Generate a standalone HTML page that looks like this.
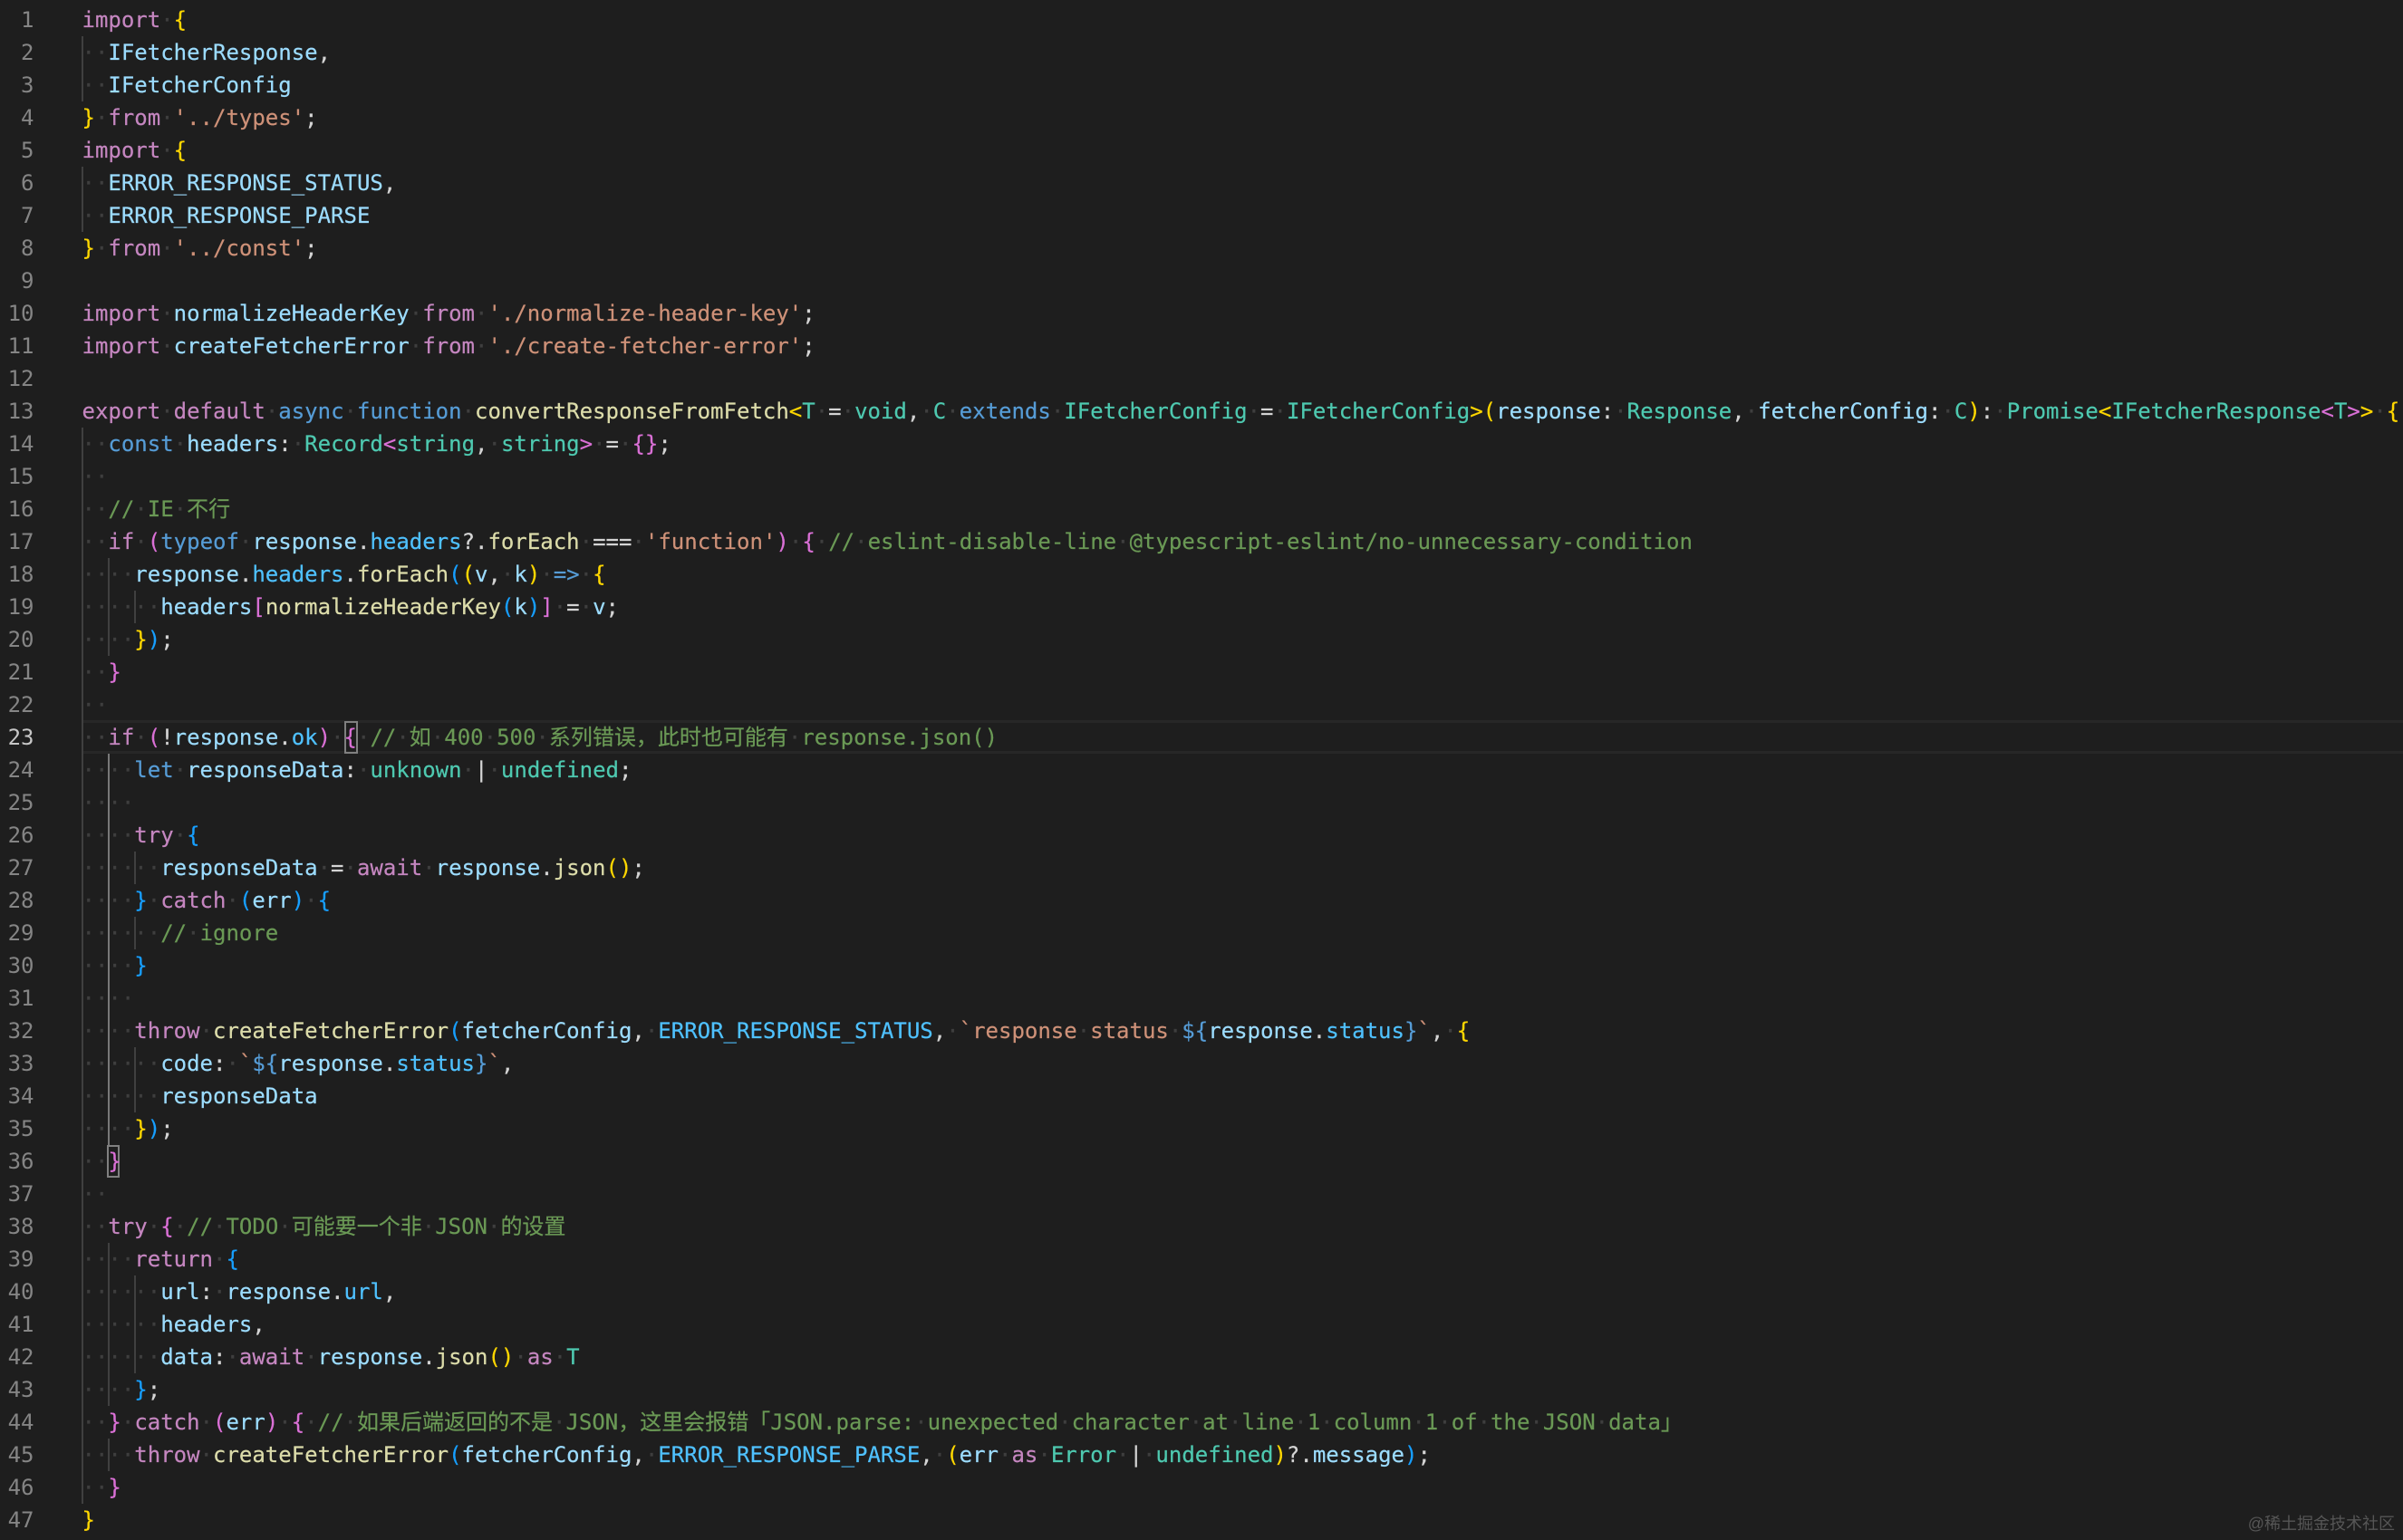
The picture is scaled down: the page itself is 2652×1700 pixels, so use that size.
<!DOCTYPE html>
<html lang="zh-CN">
<head>
<meta charset="utf-8">
<title>convertResponseFromFetch</title>
<style>
html,body{margin:0;padding:0;background:#1e1e1e}
html{width:2652px;height:1700px;overflow:hidden}
body{width:2652px;height:1700px;overflow:hidden;position:relative}
#code,#nums{position:absolute;top:4px;font:24px/36px "DejaVu Sans Mono","Noto Sans CJK SC",monospace;color:#d4d4d4}
#code{left:90.5px;width:2562px;height:1692px;overflow:hidden;-webkit-text-stroke:.2px}
#nums{left:0;width:37.5px;text-align:right;color:#858585}
#nums div:nth-child(23){color:#c6c6c6}
#code div,#nums div{height:36px;white-space:pre}
#code{z-index:3}
i{font-style:normal;color:#3e3e3e}
b{font-weight:400}
.k{color:#c586c0}.s{color:#ce9178}.v{color:#9cdcfe}.c{color:#4fc1ff}.f{color:#dcdcaa}.t{color:#4ec9b0}.y{color:#569cd6}.g{color:#ffd700}.m{color:#da70d6}.l{color:#179fff}.o{color:#6a9955}
.ig{position:absolute;width:2px;background:#404040;z-index:2}
.a{background:#787878}
.hl{position:absolute;left:91px;top:795px;width:2561px;height:31px;border:solid #272727;border-width:3px 0;z-index:1}
.bx{position:absolute;box-sizing:border-box;border:2px solid #808080;z-index:2}
#wm{position:absolute;right:9px;top:1671px;font:18px/22px "Liberation Sans","Noto Sans CJK SC",sans-serif;color:#565656;z-index:4}
</style>
</head>
<body>
<div class="hl"></div>
<div class="ig" style="left:90px;top:40px;height:72px"></div>
<div class="ig" style="left:90px;top:184px;height:72px"></div>
<div class="ig" style="left:90px;top:472px;height:1188px"></div>
<div class="ig" style="left:119px;top:616px;height:108px"></div>
<div class="ig a" style="left:119px;top:832px;height:432px"></div>
<div class="ig" style="left:119px;top:1372px;height:180px"></div>
<div class="ig" style="left:119px;top:1588px;height:36px"></div>
<div class="ig" style="left:148px;top:652px;height:36px"></div>
<div class="ig" style="left:148px;top:940px;height:36px"></div>
<div class="ig" style="left:148px;top:1012px;height:36px"></div>
<div class="ig" style="left:148px;top:1156px;height:72px"></div>
<div class="ig" style="left:148px;top:1408px;height:108px"></div>
<div class="bx" style="left:380px;top:796px;width:15px;height:36px"></div>
<div class="bx" style="left:118px;top:1264px;width:14px;height:36px"></div>
<div id="nums"><div>1</div><div>2</div><div>3</div><div>4</div><div>5</div><div>6</div><div>7</div><div>8</div><div>9</div><div>10</div><div>11</div><div>12</div><div>13</div><div>14</div><div>15</div><div>16</div><div>17</div><div>18</div><div>19</div><div>20</div><div>21</div><div>22</div><div>23</div><div>24</div><div>25</div><div>26</div><div>27</div><div>28</div><div>29</div><div>30</div><div>31</div><div>32</div><div>33</div><div>34</div><div>35</div><div>36</div><div>37</div><div>38</div><div>39</div><div>40</div><div>41</div><div>42</div><div>43</div><div>44</div><div>45</div><div>46</div><div>47</div></div>
<div id="code">
<div><b class="k">import</b><i>·</i><b class="g">{</b></div>
<div><i>··</i><b class="v">IFetcherResponse</b>,</div>
<div><i>··</i><b class="v">IFetcherConfig</b></div>
<div><b class="g">}</b><i>·</i><b class="k">from</b><i>·</i><b class="s">'../types'</b>;</div>
<div><b class="k">import</b><i>·</i><b class="g">{</b></div>
<div><i>··</i><b class="v">ERROR_RESPONSE_STATUS</b>,</div>
<div><i>··</i><b class="v">ERROR_RESPONSE_PARSE</b></div>
<div><b class="g">}</b><i>·</i><b class="k">from</b><i>·</i><b class="s">'../const'</b>;</div>
<div></div>
<div><b class="k">import</b><i>·</i><b class="v">normalizeHeaderKey</b><i>·</i><b class="k">from</b><i>·</i><b class="s">'./normalize-header-key'</b>;</div>
<div><b class="k">import</b><i>·</i><b class="v">createFetcherError</b><i>·</i><b class="k">from</b><i>·</i><b class="s">'./create-fetcher-error'</b>;</div>
<div></div>
<div><b class="k">export</b><i>·</i><b class="k">default</b><i>·</i><b class="y">async</b><i>·</i><b class="y">function</b><i>·</i><b class="f">convertResponseFromFetch</b><b class="g">&lt;</b><b class="t">T</b><i>·</i>=<i>·</i><b class="t">void</b>,<i>·</i><b class="t">C</b><i>·</i><b class="y">extends</b><i>·</i><b class="t">IFetcherConfig</b><i>·</i>=<i>·</i><b class="t">IFetcherConfig</b><b class="g">&gt;(</b><b class="v">response</b>:<i>·</i><b class="t">Response</b>,<i>·</i><b class="v">fetcherConfig</b>:<i>·</i><b class="t">C</b><b class="g">)</b>:<i>·</i><b class="t">Promise</b><b class="g">&lt;</b><b class="t">IFetcherResponse</b><b class="m">&lt;</b><b class="t">T</b><b class="m">&gt;</b><b class="g">&gt;</b><i>·</i><b class="g">{</b></div>
<div><i>··</i><b class="y">const</b><i>·</i><b class="v">headers</b>:<i>·</i><b class="t">Record</b><b class="m">&lt;</b><b class="t">string</b>,<i>·</i><b class="t">string</b><b class="m">&gt;</b><i>·</i>=<i>·</i><b class="m">{}</b>;</div>
<div><i>··</i></div>
<div><i>··</i><b class="o">//</b><i>·</i><b class="o">IE</b><i>·</i><b class="o">不行</b></div>
<div><i>··</i><b class="k">if</b><i>·</i><b class="m">(</b><b class="y">typeof</b><i>·</i><b class="v">response</b>.<b class="c">headers</b>?.<b class="f">forEach</b><i>·</i>===<i>·</i><b class="s">'function'</b><b class="m">)</b><i>·</i><b class="m">{</b><i>·</i><b class="o">//</b><i>·</i><b class="o">eslint-disable-line</b><i>·</i><b class="o">@typescript-eslint/no-unnecessary-condition</b></div>
<div><i>····</i><b class="v">response</b>.<b class="c">headers</b>.<b class="f">forEach</b><b class="l">(</b><b class="g">(</b><b class="v">v</b>,<i>·</i><b class="v">k</b><b class="g">)</b><i>·</i><b class="y">=&gt;</b><i>·</i><b class="g">{</b></div>
<div><i>······</i><b class="v">headers</b><b class="m">[</b><b class="f">normalizeHeaderKey</b><b class="l">(</b><b class="v">k</b><b class="l">)</b><b class="m">]</b><i>·</i>=<i>·</i><b class="v">v</b>;</div>
<div><i>····</i><b class="g">}</b><b class="l">)</b>;</div>
<div><i>··</i><b class="m">}</b></div>
<div><i>··</i></div>
<div><i>··</i><b class="k">if</b><i>·</i><b class="m">(</b>!<b class="v">response</b>.<b class="c">ok</b><b class="m">)</b><i>·</i><b class="m">{</b><i>·</i><b class="o">//</b><i>·</i><b class="o">如</b><i>·</i><b class="o">400</b><i>·</i><b class="o">500</b><i>·</i><b class="o">系列错误，此时也可能有</b><i>·</i><b class="o">response.json()</b></div>
<div><i>····</i><b class="y">let</b><i>·</i><b class="v">responseData</b>:<i>·</i><b class="t">unknown</b><i>·</i>|<i>·</i><b class="t">undefined</b>;</div>
<div><i>····</i></div>
<div><i>····</i><b class="k">try</b><i>·</i><b class="l">{</b></div>
<div><i>······</i><b class="v">responseData</b><i>·</i>=<i>·</i><b class="k">await</b><i>·</i><b class="v">response</b>.<b class="f">json</b><b class="g">()</b>;</div>
<div><i>····</i><b class="l">}</b><i>·</i><b class="k">catch</b><i>·</i><b class="l">(</b><b class="v">err</b><b class="l">)</b><i>·</i><b class="l">{</b></div>
<div><i>······</i><b class="o">//</b><i>·</i><b class="o">ignore</b></div>
<div><i>····</i><b class="l">}</b></div>
<div><i>····</i></div>
<div><i>····</i><b class="k">throw</b><i>·</i><b class="f">createFetcherError</b><b class="l">(</b><b class="v">fetcherConfig</b>,<i>·</i><b class="c">ERROR_RESPONSE_STATUS</b>,<i>·</i><b class="s">`response</b><i>·</i><b class="s">status</b><i>·</i><b class="y">${</b><b class="v">response</b>.<b class="c">status</b><b class="y">}</b><b class="s">`</b>,<i>·</i><b class="g">{</b></div>
<div><i>······</i><b class="v">code</b>:<i>·</i><b class="s">`</b><b class="y">${</b><b class="v">response</b>.<b class="c">status</b><b class="y">}</b><b class="s">`</b>,</div>
<div><i>······</i><b class="v">responseData</b></div>
<div><i>····</i><b class="g">}</b><b class="l">)</b>;</div>
<div><i>··</i><b class="m">}</b></div>
<div><i>··</i></div>
<div><i>··</i><b class="k">try</b><i>·</i><b class="m">{</b><i>·</i><b class="o">//</b><i>·</i><b class="o">TODO</b><i>·</i><b class="o">可能要一个非</b><i>·</i><b class="o">JSON</b><i>·</i><b class="o">的设置</b></div>
<div><i>····</i><b class="k">return</b><i>·</i><b class="l">{</b></div>
<div><i>······</i><b class="v">url</b>:<i>·</i><b class="v">response</b>.<b class="c">url</b>,</div>
<div><i>······</i><b class="v">headers</b>,</div>
<div><i>······</i><b class="v">data</b>:<i>·</i><b class="k">await</b><i>·</i><b class="v">response</b>.<b class="f">json</b><b class="g">()</b><i>·</i><b class="k">as</b><i>·</i><b class="t">T</b></div>
<div><i>····</i><b class="l">}</b>;</div>
<div><i>··</i><b class="m">}</b><i>·</i><b class="k">catch</b><i>·</i><b class="m">(</b><b class="v">err</b><b class="m">)</b><i>·</i><b class="m">{</b><i>·</i><b class="o">//</b><i>·</i><b class="o">如果后端返回的不是</b><i>·</i><b class="o">JSON，这里会报错「JSON.parse:</b><i>·</i><b class="o">unexpected</b><i>·</i><b class="o">character</b><i>·</i><b class="o">at</b><i>·</i><b class="o">line</b><i>·</i><b class="o">1</b><i>·</i><b class="o">column</b><i>·</i><b class="o">1</b><i>·</i><b class="o">of</b><i>·</i><b class="o">the</b><i>·</i><b class="o">JSON</b><i>·</i><b class="o">data」</b></div>
<div><i>····</i><b class="k">throw</b><i>·</i><b class="f">createFetcherError</b><b class="l">(</b><b class="v">fetcherConfig</b>,<i>·</i><b class="c">ERROR_RESPONSE_PARSE</b>,<i>·</i><b class="g">(</b><b class="v">err</b><i>·</i><b class="k">as</b><i>·</i><b class="t">Error</b><i>·</i>|<i>·</i><b class="t">undefined</b><b class="g">)</b>?.<b class="v">message</b><b class="l">)</b>;</div>
<div><i>··</i><b class="m">}</b></div>
<div><b class="g">}</b></div>
</div>
<div id="wm">@稀土掘金技术社区</div>
</body>
</html>
